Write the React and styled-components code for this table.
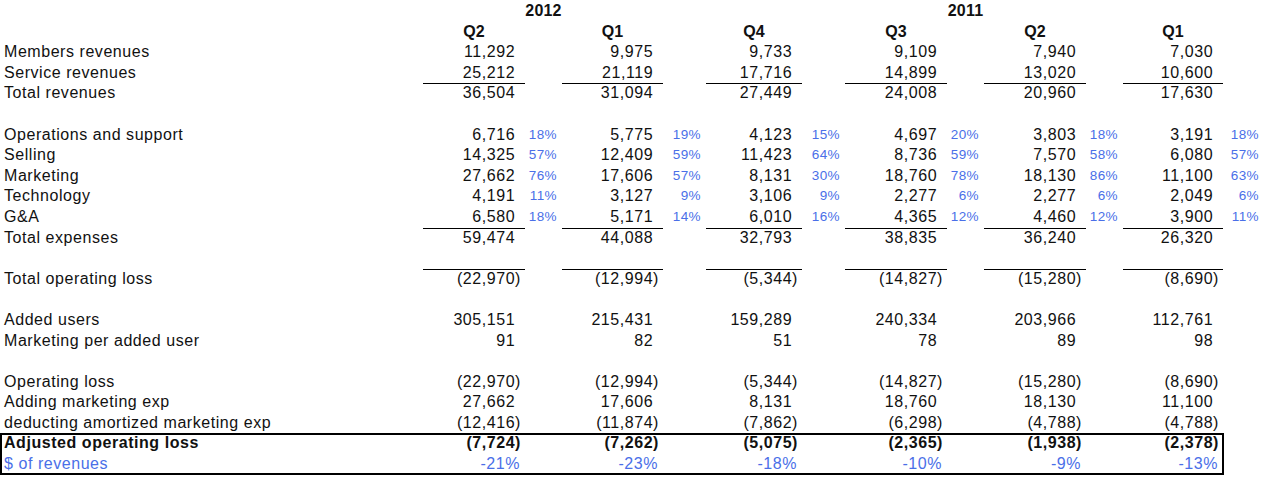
import React from "react";
import styled, { createGlobalStyle } from "styled-components";

const GlobalStyle = createGlobalStyle`
  html, body {
    margin: 0;
    padding: 0;
    background: #fff;
  }
  body {
    font-family: "Liberation Sans", Arial, sans-serif;
    color: #111;
  }
`;

const COLS = "423px 102px 37px 101px 43px 96px 43px 102px 37px 102px 37px 100px 41px";
const BLUE = "#4a6fe8";

const Sheet = styled.div`
  width: 1264px;
  padding-top: 1px;
  display: flex;
  flex-direction: column;
`;

const Row = styled.div`
  display: grid;
  grid-template-columns: ${COLS};
  height: 20.6px;
  font-size: 16px;
  line-height: 20.6px;
  letter-spacing: 0.55px;
  font-weight: ${(p) => (p.$bold ? 700 : 400)};
  color: ${(p) => (p.$blue ? BLUE : "#111")};
  white-space: nowrap;
`;

const Label = styled.div`
  padding-left: 4px;
  overflow: visible;
`;

const Num = styled.div`
  text-align: right;
  padding-right: ${(p) => (p.$raw ? "5px" : "4px")};
  box-shadow: ${(p) => (p.$ruled ? "inset 0 1px 0 #000" : "none")};
`;

const Pad = styled.span`
  visibility: hidden;
`;

const Pct = styled.div`
  text-align: right;
  padding-right: 5px;
  font-size: 13.5px;
  color: ${BLUE};
  letter-spacing: 0.4px;
`;

const Head = styled.div`
  text-align: center;
  font-weight: 700;
  letter-spacing: 0.2px;
  overflow: visible;
`;

const Boxed = styled.div`
  width: 1224px;
  outline: 2px solid #000;
  outline-offset: -2px;
  display: flex;
  flex-direction: column;
`;

const fmt = (v) => {
  if (v == null) return "";
  if (typeof v === "string") return <span>{v}</span>;
  if (v < 0) return <span>({Math.abs(v).toLocaleString("en-US")})</span>;
  return (
    <span>
      {v.toLocaleString("en-US")}
      <Pad>)</Pad>
    </span>
  );
};

const DataRow = ({ label, values = [], pcts, ruled, bold, blue, raw }) => (
  <Row $bold={bold} $blue={blue}>
    <Label>{label}</Label>
    {[0, 1, 2, 3, 4, 5].map((i) => (
      <React.Fragment key={i}>
        <Num $ruled={ruled} $raw={raw}>
          {values.length ? fmt(values[i]) : ""}
        </Num>
        <Pct>{pcts ? `${pcts[i]}%` : ""}</Pct>
      </React.Fragment>
    ))}
  </Row>
);

const App = () => (
  <>
    <GlobalStyle />
    <Sheet>
      <Row>
        <Label />
        <div />
        <Head>2012</Head>
        <div />
        <div />
        <div />
        <div />
        <div />
        <Head>2011</Head>
      </Row>
      <Row>
        <Label />
        {["Q2", "Q1", "Q4", "Q3", "Q2", "Q1"].map((q, i) => (
          <React.Fragment key={i}>
            <Head>{q}</Head>
            <div />
          </React.Fragment>
        ))}
      </Row>
      <DataRow label="Members revenues" values={[11292, 9975, 9733, 9109, 7940, 7030]} />
      <DataRow label="Service revenues" values={[25212, 21119, 17716, 14899, 13020, 10600]} />
      <DataRow label="Total revenues" values={[36504, 31094, 27449, 24008, 20960, 17630]} ruled />
      <DataRow />
      <DataRow label="Operations and support" values={[6716, 5775, 4123, 4697, 3803, 3191]} pcts={[18, 19, 15, 20, 18, 18]} />
      <DataRow label="Selling" values={[14325, 12409, 11423, 8736, 7570, 6080]} pcts={[57, 59, 64, 59, 58, 57]} />
      <DataRow label="Marketing" values={[27662, 17606, 8131, 18760, 18130, 11100]} pcts={[76, 57, 30, 78, 86, 63]} />
      <DataRow label="Technology" values={[4191, 3127, 3106, 2277, 2277, 2049]} pcts={[11, 9, 9, 6, 6, 6]} />
      <DataRow label="G&A" values={[6580, 5171, 6010, 4365, 4460, 3900]} pcts={[18, 14, 16, 12, 12, 11]} />
      <DataRow label="Total expenses" values={[59474, 44088, 32793, 38835, 36240, 26320]} ruled />
      <DataRow />
      <DataRow label="Total operating loss" values={[-22970, -12994, -5344, -14827, -15280, -8690]} ruled />
      <DataRow />
      <DataRow label="Added users" values={[305151, 215431, 159289, 240334, 203966, 112761]} />
      <DataRow label="Marketing per added user" values={[91, 82, 51, 78, 89, 98]} />
      <DataRow />
      <DataRow label="Operating loss" values={[-22970, -12994, -5344, -14827, -15280, -8690]} />
      <DataRow label="Adding marketing exp" values={[27662, 17606, 8131, 18760, 18130, 11100]} />
      <DataRow label="deducting amortized marketing exp" values={[-12416, -11874, -7862, -6298, -4788, -4788]} />
      <Boxed>
        <DataRow label="Adjusted operating loss" values={[-7724, -7262, -5075, -2365, -1938, -2378]} bold />
        <DataRow label="$ of revenues" values={["-21%", "-23%", "-18%", "-10%", "-9%", "-13%"]} blue raw />
      </Boxed>
    </Sheet>
  </>
);

export default App;
